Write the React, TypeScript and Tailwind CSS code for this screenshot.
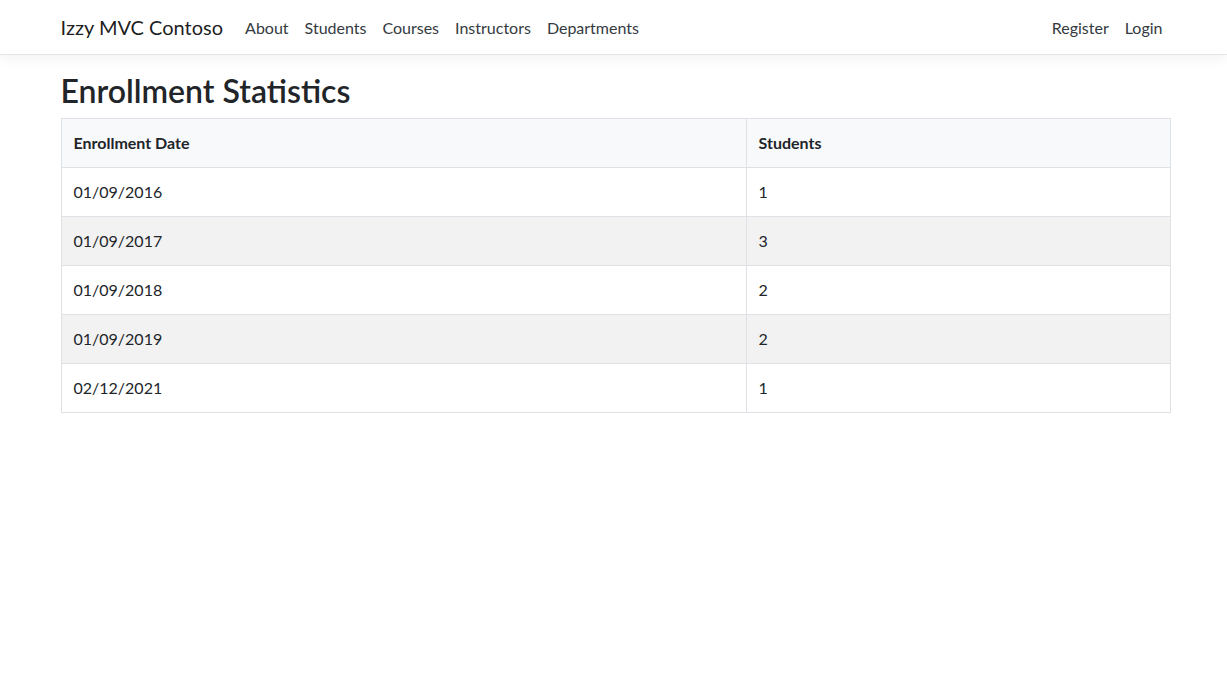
const rows = [
  { date: '01/09/2016', count: 1 },
  { date: '01/09/2017', count: 3 },
  { date: '01/09/2018', count: 2 },
  { date: '01/09/2019', count: 2 },
  { date: '02/12/2021', count: 1 },
];

const navLinks = ['About', 'Students', 'Courses', 'Instructors', 'Departments'];

export default function App() {
  return (
    <div className="min-h-[686px] bg-white text-[#212529] font-['Lato',sans-serif]">
      <header className="h-[55px] border-b border-[#e5e5e5] bg-white shadow-[0_4px_12px_rgba(0,0,0,0.05)]">
        <nav className="mx-auto flex h-full w-[1110px] translate-x-[2px] items-center">
          <a className="mr-[14px] text-[20px] leading-[30px] text-black/90">Izzy MVC Contoso</a>
          <ul className="flex flex-1 items-center pt-px">
            {navLinks.map((l) => (
              <li key={l}>
                <a className="block px-2 text-[16px] leading-6 text-[#343a40]">{l}</a>
              </li>
            ))}
          </ul>
          <ul className="flex items-center pt-px">
            <li>
              <a className="block px-2 text-[16px] leading-6 text-[#343a40]">Register</a>
            </li>
            <li>
              <a className="block px-2 text-[16px] leading-6 text-[#343a40]">Login</a>
            </li>
          </ul>
        </nav>
      </header>

      <main className="mx-auto mt-4 w-[1110px] translate-x-[2px]">
        <h2 className="mb-2 text-[32px] font-semibold leading-[39px]">Enrollment Statistics</h2>
        <table className="w-full border-collapse border border-[#dee2e6] text-[16px] leading-6">
          <thead>
            <tr className="bg-[#f8f9fa]">
              <th className="w-[685px] border border-[#dee2e6] p-3 text-left font-bold">Enrollment Date</th>
              <th className="border border-[#dee2e6] p-3 text-left font-bold">Students</th>
            </tr>
          </thead>
          <tbody>
            {rows.map((r, i) => (
              <tr key={r.date} className={i % 2 === 1 ? 'bg-[#f2f2f2]' : 'bg-white'}>
                <td className="border border-[#dee2e6] p-3">{r.date}</td>
                <td className="border border-[#dee2e6] p-3">{r.count}</td>
              </tr>
            ))}
          </tbody>
        </table>
      </main>
    </div>
  );
}
